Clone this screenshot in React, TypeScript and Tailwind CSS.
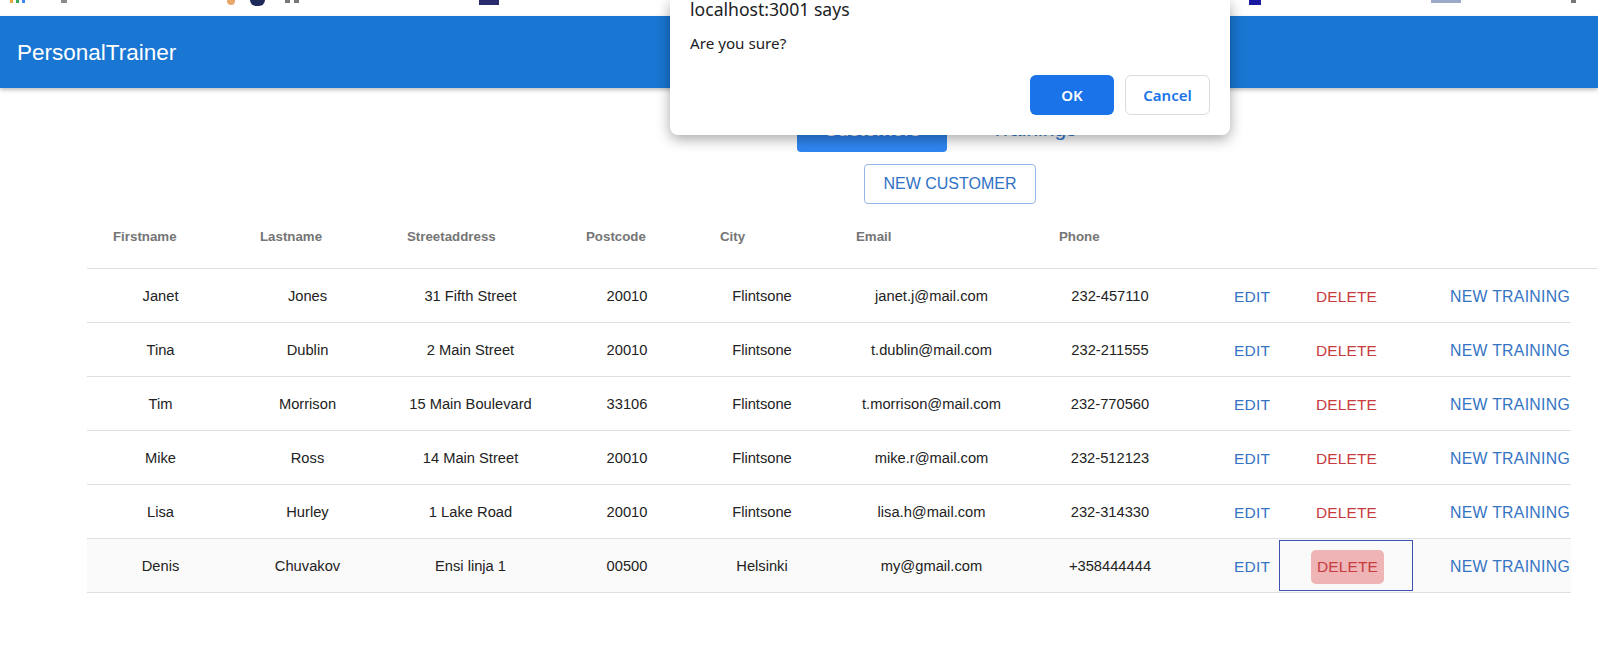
const customers = [
  { first: "Janet", last: "Jones", street: "31 Fifth Street", post: "20010", city: "Flintsone", email: "janet.j@mail.com", phone: "232-457110" },
  { first: "Tina", last: "Dublin", street: "2 Main Street", post: "20010", city: "Flintsone", email: "t.dublin@mail.com", phone: "232-211555" },
  { first: "Tim", last: "Morrison", street: "15 Main Boulevard", post: "33106", city: "Flintsone", email: "t.morrison@mail.com", phone: "232-770560" },
  { first: "Mike", last: "Ross", street: "14 Main Street", post: "20010", city: "Flintsone", email: "mike.r@mail.com", phone: "232-512123" },
  { first: "Lisa", last: "Hurley", street: "1 Lake Road", post: "20010", city: "Flintsone", email: "lisa.h@mail.com", phone: "232-314330" },
  { first: "Denis", last: "Chuvakov", street: "Ensi linja 1", post: "00500", city: "Helsinki", email: "my@gmail.com", phone: "+358444444" },
];

const headers = [
  { label: "Firstname", w: "w-[147px]" },
  { label: "Lastname", w: "w-[147px]" },
  { label: "Streetaddress", w: "w-[179px]" },
  { label: "Postcode", w: "w-[134px]" },
  { label: "City", w: "w-[136px]" },
  { label: "Email", w: "w-[203px]" },
  { label: "Phone", w: "w-[154px]" },
];

const BookmarkBar = () => {
  return (
    <div className="h-[16px] bg-white flex items-start">
      <div className="ml-[10px] flex gap-[3px]">
        <div className="w-[3px] h-[3px] bg-[#e8a33c]" />
        <div className="w-[3px] h-[3px] bg-[#3aa757]" />
        <div className="w-[3px] h-[3px] bg-[#4285f4]" />
      </div>
      <div className="ml-[36px] w-[6px] h-[3px] bg-[#8a8a8a]" />
      <div className="ml-[160px] w-[8px] h-[5px] rounded-b-full bg-[#e8a86c]" />
      <div className="ml-[15px] w-[15px] h-[6px] rounded-b-full bg-[#1d2a5a]" />
      <div className="ml-[20px] w-[5px] h-[3px] bg-[#777]" />
      <div className="ml-[4px] w-[5px] h-[3px] bg-[#777]" />
      <div className="ml-[180px] w-[20px] h-[5px] bg-[#2a2a6e]" />
      <div className="ml-[750px] w-[12px] h-[5px] bg-[#1a1aa0]" />
      <div className="ml-[170px] w-[30px] h-[3px] bg-[#9aaac8]" />
      <div className="ml-[110px] w-[5px] h-[3px] bg-[#777]" />
    </div>
  );
};

const Alert = () => {
  return (
    <div className="absolute left-[670px] top-0 w-[560px] h-[135px] bg-white rounded-b-[8px] shadow-[0_4px_14px_rgba(0,0,0,0.35)] px-[20px] font-['Noto_Sans',sans-serif] flex flex-col">
      <p className="text-[17.6px] leading-[22px] text-[#202124] -mt-[2px]">localhost:3001 says</p>
      <p className="text-[15.2px] leading-[20px] text-[#202124] mt-[13px]">Are you sure?</p>
      <div className="flex justify-end gap-[11px] mt-auto mb-[20px]">
        <button className="w-[84px] h-[40px] rounded-[6px] bg-[#1a73e8] text-white text-[15px] font-semibold">
          OK
        </button>
        <button className="w-[85px] h-[40px] rounded-[6px] bg-white border border-[#dadce0] text-[#1a73e8] text-[15px] font-semibold">
          Cancel
        </button>
      </div>
    </div>
  );
};

export default function App() {
  return (
    <div className="relative w-full min-h-[672px] bg-white overflow-hidden font-['Liberation_Sans',Arial,sans-serif]">
      <BookmarkBar />
      <header className="h-[72px] bg-[#1976d2] flex items-center pl-[17px] shadow-[0_2px_4px_rgba(0,0,0,0.25)]">
        <h1 className="text-white text-[22.5px] pt-[1px]">PersonalTrainer</h1>
      </header>

      <div className="mt-[18px] flex items-center pl-[797px]">
        <button className="w-[150px] h-[46px] rounded-[4px] bg-[#2f86f2] text-white text-[20px]">
          Customers
        </button>
        <button className="ml-[44px] text-[21px] text-[#2f7bd6]">Trainings</button>
      </div>

      <div className="mt-[12px] pl-[864px]">
        <button className="w-[172px] h-[40px] rounded-[4px] border border-[#95b8e4] text-[#2f72c4] text-[16px]">
          NEW CUSTOMER
        </button>
      </div>

      <div className="ml-[87px] mt-[1px]">
        <div className="flex h-[64px] items-center border-b border-[#e0e0e0] w-[1511px]">
          {headers.map((h) => (
            <div key={h.label} className={`${h.w} pl-[26px] text-[13.3px] font-bold text-[#757575]`}>
              {h.label}
            </div>
          ))}
        </div>
        {customers.map((c, i) => {
          const last = i === customers.length - 1;
          return (
            <div
              key={c.first}
              className={`flex h-[54px] w-[1484px] items-center pt-[2px] border-b border-[#e0e0e0] text-[14.7px] text-[#222] ${
                last ? "bg-[#fafafa]" : "bg-white"
              }`}
            >
              <div className="w-[147px] text-center">{c.first}</div>
              <div className="w-[147px] text-center">{c.last}</div>
              <div className="w-[179px] text-center">{c.street}</div>
              <div className="w-[134px] text-center">{c.post}</div>
              <div className="w-[136px] text-center">{c.city}</div>
              <div className="w-[203px] text-center">{c.email}</div>
              <div className="w-[154px] text-center">{c.phone}</div>
              <div className="w-[92px] pl-[47px] text-[15.5px] tracking-[0.2px] text-[#3474c4]">EDIT</div>
              <div
                className={`w-[134px] h-full flex items-center pl-[31px] ${
                  last ? "border border-[#3f51b5] -mt-[2px] h-[53px]" : ""
                }`}
              >
                <span
                  className={`h-[34px] px-[6px] flex items-center rounded-[5px] text-[15.5px] tracking-[0.1px] text-[#c83c3e] ${
                    last ? "bg-[#eeb4b6] mt-[2px]" : ""
                  }`}
                >
                  DELETE
                </span>
              </div>
              <div className="w-[158px] pl-[37px] whitespace-nowrap text-[15.8px] tracking-[0.3px] text-[#3474c4]">
                NEW TRAINING
              </div>
            </div>
          );
        })}
      </div>

      <Alert />
    </div>
  );
}
